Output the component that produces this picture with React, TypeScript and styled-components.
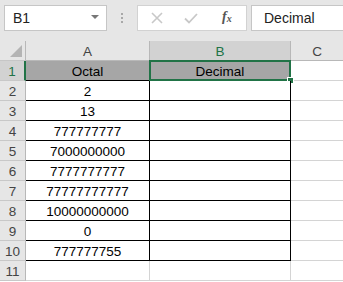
import styled, { createGlobalStyle, css } from "styled-components";

const GlobalStyle = createGlobalStyle`
  html, body {
    margin: 0;
    padding: 0;
    background: #ffffff;
  }
  body {
    font-family: "Liberation Sans", Arial, sans-serif;
  }
`;

const green = "#217346";

const octals = [
  "2",
  "13",
  "777777777",
  "7000000000",
  "7777777777",
  "77777777777",
  "10000000000",
  "0",
  "777777755",
];

export default function App() {
  return (
    <>
      <GlobalStyle />
      <Sheet>
        <Toolbar>
          <NameBox>
            <span>B1</span>
            <DropArrow />
          </NameBox>
          <Grip>
            <i />
            <i />
            <i />
          </Grip>
          <FormulaButtons>
            <svg width="12" height="12" viewBox="0 0 12 12">
              <path d="M1 1 L11 11 M11 1 L1 11" stroke="#c8c8c8" strokeWidth="1.6" fill="none" />
            </svg>
            <svg width="14" height="11" viewBox="0 0 14 11">
              <path d="M1 5.5 L5 9.5 L13 1" stroke="#c8c8c8" strokeWidth="1.8" fill="none" />
            </svg>
            <Fx>
              f<sub>x</sub>
            </Fx>
          </FormulaButtons>
          <FormulaInput>Decimal</FormulaInput>
        </Toolbar>

        <Grid>
          <Corner>
            <CornerTriangle />
          </Corner>
          <ColHeader>A</ColHeader>
          <ColHeader $selected>B</ColHeader>
          <ColHeader $last>C</ColHeader>

          <RowHeader $selected>1</RowHeader>
          <Cell $title>Octal</Cell>
          <Cell $title>
            Decimal
            <Selection>
              <Handle />
            </Selection>
          </Cell>
          <BlankCell />

          {octals.map((value, i) => (
            <Row key={i} num={i + 2} value={value} />
          ))}

          <RowHeader>11</RowHeader>
          <BlankCell $divided />
          <BlankCell $divided />
          <BlankCell />
        </Grid>
      </Sheet>
    </>
  );
}

function Row({ num, value }: { num: number; value: string }) {
  return (
    <>
      <RowHeader>{num}</RowHeader>
      <Cell>{value}</Cell>
      <Cell />
      <BlankCell />
    </>
  );
}

const Sheet = styled.div`
  width: 343px;
  height: 282px;
  overflow: hidden;
  background: #ffffff;
`;

const Toolbar = styled.div`
  height: 41px;
  box-sizing: border-box;
  padding: 5px 0 0 4px;
  background: #e6e6e6;
  display: flex;
  align-items: flex-start;
`;

const box = css`
  height: 26px;
  box-sizing: border-box;
  background: #ffffff;
  border: 1px solid #c6c6c6;
`;

const NameBox = styled.div`
  ${box};
  width: 103px;
  display: flex;
  align-items: center;
  justify-content: space-between;
  padding: 0 7px 0 8px;
  font-size: 14px;
  color: #222;
`;

const DropArrow = styled.span`
  width: 0;
  height: 0;
  border-left: 4px solid transparent;
  border-right: 4px solid transparent;
  border-top: 4px solid #777;
  margin-top: -3px;
`;

const Grip = styled.div`
  width: 30px;
  height: 26px;
  display: flex;
  flex-direction: column;
  align-items: center;
  justify-content: center;
  gap: 2px;

  i {
    width: 2px;
    height: 2px;
    background: #a8a8a8;
  }
`;

const FormulaButtons = styled.div`
  ${box};
  width: 110px;
  border-color: #d2d2d2;
  display: flex;
  align-items: center;
  padding-left: 13px;
  gap: 21px;

  svg {
    display: block;
  }
`;

const Fx = styled.span`
  font-family: "Liberation Serif", "Times New Roman", serif;
  font-style: italic;
  font-weight: bold;
  font-size: 14px;
  color: #555;
  margin-left: 3px;
  margin-top: -3px;

  sub {
    font-size: 10px;
    vertical-align: -1px;
  }
`;

const FormulaInput = styled.div`
  ${box};
  flex: 1;
  margin-left: 4px;
  border-right: none;
  display: flex;
  align-items: center;
  padding-left: 12px;
  font-size: 14px;
  color: #222;
`;

const Grid = styled.div`
  display: grid;
  grid-template-columns: 26px 124px 141px 1fr;
  grid-auto-rows: 20px;
  font-size: 13.5px;
`;

const Corner = styled.div`
  background: #e6e6e6;
  border-right: 1px solid #b8b8b8;
  border-bottom: 1px solid #c6c6c6;
  position: relative;
`;

const CornerTriangle = styled.span`
  position: absolute;
  right: 3px;
  bottom: 3px;
  width: 0;
  height: 0;
  border-left: 12px solid transparent;
  border-bottom: 12px solid #b4b4b4;
`;

const ColHeader = styled.div<{ $selected?: boolean; $last?: boolean }>`
  box-sizing: border-box;
  background: ${(p) => (p.$selected ? "#d2d2d2" : "#e6e6e6")};
  color: ${(p) => (p.$selected ? green : "#444")};
  border-right: ${(p) => (p.$last ? "none" : "1px solid #b8b8b8")};
  border-bottom: 1px solid ${(p) => (p.$selected ? green : "#b8b8b8")};
  display: flex;
  align-items: center;
  justify-content: center;
  padding-top: 1px;
`;

const RowHeader = styled.div<{ $selected?: boolean }>`
  box-sizing: border-box;
  background: ${(p) => (p.$selected ? "#d2d2d2" : "#e6e6e6")};
  color: ${(p) => (p.$selected ? green : "#444")};
  border-right: ${(p) => (p.$selected ? `2px solid ${green}` : "1px solid #b8b8b8")};
  border-bottom: 1px solid #c8c8c8;
  display: flex;
  align-items: center;
  justify-content: center;
  padding-top: 1px;
`;

const Cell = styled.div<{ $title?: boolean }>`
  position: relative;
  box-sizing: border-box;
  background: ${(p) => (p.$title ? "#a6a6a6" : "#ffffff")};
  color: #000;
  border-right: 1px solid #000;
  border-bottom: 1px solid #000;
  display: flex;
  align-items: center;
  justify-content: center;
  padding-top: 1px;
  white-space: nowrap;
`;

const BlankCell = styled.div<{ $divided?: boolean }>`
  box-sizing: border-box;
  border-bottom: 1px solid #d4d4d4;
  border-right: ${(p) => (p.$divided ? "1px solid #d4d4d4" : "none")};
`;

const Selection = styled.div`
  position: absolute;
  top: -1px;
  left: -1px;
  right: -1px;
  bottom: -1px;
  border: 2px solid ${green};
  pointer-events: none;
`;

const Handle = styled.span`
  position: absolute;
  right: -5px;
  bottom: -5px;
  width: 5px;
  height: 5px;
  background: ${green};
  border: 1px solid #ffffff;
`;
